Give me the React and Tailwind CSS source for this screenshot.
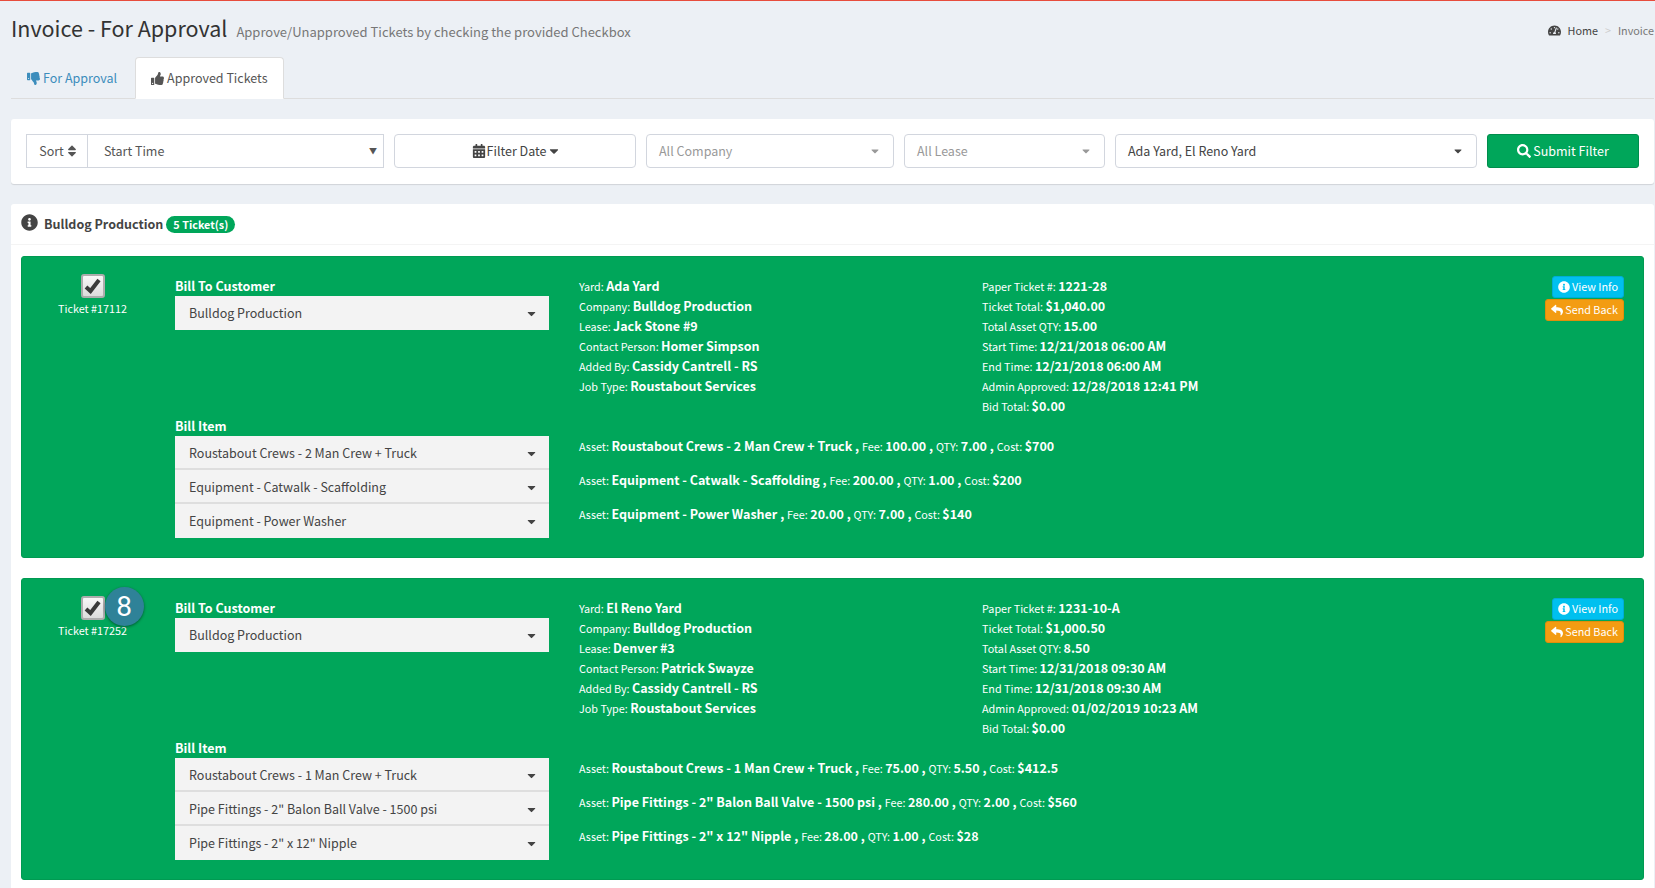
import React from "react";
import { FaThumbsDown, FaThumbsUp, FaCalendarAlt, FaSort, FaCaretDown, FaInfoCircle, FaSearch, FaReply, FaTachometerAlt } from "react-icons/fa";

const tickets = [
  {
    id: "17112",
    left: [["Yard", "Ada Yard"], ["Company", "Bulldog Production"], ["Lease", "Jack Stone #9"], ["Contact Person", "Homer Simpson"], ["Added By", "Cassidy Cantrell - RS"], ["Job Type", "Roustabout Services"]],
    right: [["Paper Ticket #", "1221-28"], ["Ticket Total", "$1,040.00"], ["Total Asset QTY", "15.00"], ["Start Time", "12/21/2018 06:00 AM"], ["End Time", "12/21/2018 06:00 AM"], ["Admin Approved", "12/28/2018 12:41 PM"], ["Bid Total", "$0.00"]],
    items: [
      ["Roustabout Crews - 2 Man Crew + Truck", "100.00", "7.00", "$700"],
      ["Equipment - Catwalk - Scaffolding", "200.00", "1.00", "$200"],
      ["Equipment - Power Washer", "20.00", "7.00", "$140"],
    ],
  },
  {
    id: "17252",
    badge: "8",
    left: [["Yard", "El Reno Yard"], ["Company", "Bulldog Production"], ["Lease", "Denver #3"], ["Contact Person", "Patrick Swayze"], ["Added By", "Cassidy Cantrell - RS"], ["Job Type", "Roustabout Services"]],
    right: [["Paper Ticket #", "1231-10-A"], ["Ticket Total", "$1,000.50"], ["Total Asset QTY", "8.50"], ["Start Time", "12/31/2018 09:30 AM"], ["End Time", "12/31/2018 09:30 AM"], ["Admin Approved", "01/02/2019 10:23 AM"], ["Bid Total", "$0.00"]],
    items: [
      ["Roustabout Crews - 1 Man Crew + Truck", "75.00", "5.50", "$412.5"],
      ['Pipe Fittings - 2" Balon Ball Valve - 1500 psi', "280.00", "2.00", "$560"],
      ['Pipe Fittings - 2" x 12" Nipple', "28.00", "1.00", "$28"],
    ],
  },
];

function GreySelect({ text, divider }) {
  return (
    <div className={`h-[34px] bg-[#f3f3f3] flex items-center justify-between pl-[14px] pr-[11px] text-[12.5px] text-[#444] ${divider ? "border-b-2 border-[#dedede] pt-[2px]" : ""}`}>
      <span>{text}</span>
      <FaCaretDown className="text-[13px] text-[#444]" />
    </div>
  );
}

function Info({ rows }) {
  return (
    <div>
      {rows.map(([k, v]) => (
        <div key={k} className="h-[20px] leading-[20px] whitespace-nowrap">
          <span className="text-[10.8px]">{k}: </span>
          <b className="text-[12.5px] font-bold">{v}</b>
        </div>
      ))}
    </div>
  );
}

function Ticket({ t }) {
  return (
    <div className="bg-[#00a65a] rounded-[3px] border border-[#009a52] text-white pt-[19px] pb-[19px] pr-[19px] flex">
      <div className="w-[153px] shrink-0 flex flex-col items-center pr-[12px] mt-[-2px]">
        <div className="relative w-[24px] h-[24px]">
          <div className="w-[24px] h-[24px] rounded-[3px] border-2 border-[#adadad] bg-gradient-to-b from-[#f8f8f8] to-[#dcdcdc] flex items-center justify-center">
            <svg width="17" height="16" viewBox="0 0 17 16" fill="none">
              <polyline points="2,9 6.5,13 15,2" stroke="#3a3a3a" strokeWidth="4" />
            </svg>
          </div>
          {t.badge && (
            <div className="absolute left-[24px] top-[-9px] w-[39px] h-[39px] rounded-full bg-[#2f8298] shadow-[0_1px_3px_rgba(0,0,0,0.45)] flex items-center justify-center text-[28px] text-white" style={{ fontFamily: "Roboto, sans-serif" }}>
              {t.badge}
            </div>
          )}
        </div>
        <div className="text-[10.8px] leading-[16px] mt-[2px]">Ticket #{t.id}</div>
      </div>
      <div className="flex-1 min-w-0">
        <div className="flex h-[140px]">
          <div className="w-[374px] shrink-0">
            <div className="h-[20px] leading-[20px] text-[12.5px] font-bold">Bill To Customer</div>
            <GreySelect text="Bulldog Production" />
          </div>
          <div className="ml-[30px] w-[403px] shrink-0"><Info rows={t.left} /></div>
          <div className="w-[300px] shrink-0"><Info rows={t.right} /></div>
          <div className="flex-1 flex flex-col items-end gap-[1px]">
            <div className="h-[22px] rounded-[3px] bg-[#00c0ef] border border-[#00acd6] px-[5px] pb-[1px] text-[10.8px] flex items-center gap-[2px] whitespace-nowrap"><FaInfoCircle className="text-[12px]" />View Info</div>
            <div className="h-[22px] rounded-[3px] bg-[#f39c12] border border-[#e08e0b] px-[5px] pb-[1px] text-[10.8px] flex items-center gap-[2px] whitespace-nowrap"><FaReply className="text-[12px]" />Send Back</div>
          </div>
        </div>
        <div className="flex">
          <div className="w-[374px] shrink-0">
            <div className="h-[20px] leading-[20px] text-[12.5px] font-bold">Bill Item</div>
            {t.items.map((it, i) => <GreySelect key={it[0]} text={it[0]} divider={i < 2} />)}
          </div>
          <div className="ml-[30px] pt-[20px]">
            {t.items.map((it) => (
              <div key={it[0]} className="h-[34px] leading-[20px] whitespace-nowrap">
                <span className="text-[10.8px]">Asset: </span><b className="text-[12.5px]">{it[0]} </b><span className="font-bold text-[12.5px]">, </span>
                <span className="text-[10.8px]">Fee: </span><b className="text-[12.5px]">{it[1]} </b><span className="font-bold text-[12.5px]">, </span>
                <span className="text-[10.8px]">QTY: </span><b className="text-[12.5px]">{it[2]} </b><span className="font-bold text-[12.5px]">, </span>
                <span className="text-[10.8px]">Cost: </span><b className="text-[12.5px]">{it[3]}</b>
              </div>
            ))}
          </div>
        </div>
      </div>
    </div>
  );
}

function Select({ text, width, muted }) {
  return (
    <div className={`${width} h-[34px] bg-white border border-[#d2d6de] rounded-[4px] flex items-center justify-between pl-[12px] pr-[12px] ${muted ? "text-[#999]" : "text-[#444]"}`}>
      <span>{text}</span>
      <FaCaretDown className={`text-[12px] ${muted ? "text-[#999]" : "text-[#444]"}`} />
    </div>
  );
}

export default function App() {
  return (
    <div className="h-[888px] overflow-hidden bg-[#ecf0f5] border-t border-[#e74c3c] text-[#333] text-[12.5px]" style={{ fontFamily: '"Noto Sans CJK SC", "Noto Sans", sans-serif' }}>
      <div className="pl-[11px] pr-[1px]">
        <div className="h-[56px] flex items-center justify-between">
          <div className="flex items-baseline gap-[9px] whitespace-nowrap mb-[2px]">
            <span className="text-[21.5px] text-[#333]">Invoice - For Approval</span>
            <span className="text-[13px] text-[#777]">Approve/Unapproved Tickets by checking the provided Checkbox</span>
          </div>
          <div className="flex items-center text-[10.8px] text-[#444] whitespace-nowrap mt-[3px]">
            <FaTachometerAlt className="text-[13px] mr-[7px]" />
            <span>Home</span>
            <span className="text-[#ccc] mx-[7px]">&gt;</span>
            <span className="text-[#777]">Invoice</span>
          </div>
        </div>
        <div className="h-[42px] border-b border-[#ddd] flex items-end">
          <div className="h-[41px] pl-[16px] pr-[18px] pt-[1px] flex items-center gap-[3px] text-[#3c8dbc]"><FaThumbsDown className="text-[13px]" />For Approval</div>
          <div className="h-[42px] px-[15px] flex items-center gap-[3px] bg-white border border-[#ddd] border-b-white rounded-t-[4px] text-[#555] mb-[-1px]"><FaThumbsUp className="text-[13px]" />Approved Tickets</div>
        </div>
        <div className="mt-[20px] h-[65px] bg-white rounded-[3px] shadow-[0_1px_1px_rgba(0,0,0,0.12)] px-[15px] pt-[15px] flex items-start gap-[10px]">
          <div className="w-[358px] h-[34px] flex border border-[#d2d6de] text-[#555]">
            <div className="w-[61px] flex items-center justify-center gap-[1px] pl-[4px] border-r border-[#d2d6de]">Sort<FaSort className="text-[14px]" /></div>
            <div className="flex-1 flex items-center justify-between pl-[16px] pr-[6px]"><span>Start Time</span><span className="text-[8px]">▼</span></div>
          </div>
          <div className="w-[242px] h-[34px] bg-white border border-[#d2d6de] rounded-[4px] flex items-center justify-center gap-[1px] pl-[3px] text-[#444]"><FaCalendarAlt className="text-[14px]" />Filter Date<FaCaretDown className="text-[14px]" /></div>
          <Select text="All Company" width="w-[248px]" muted />
          <Select text="All Lease" width="w-[201px]" muted />
          <Select text="Ada Yard, El Reno Yard" width="w-[362px]" />
          <div className="w-[152px] h-[34px] bg-[#00a65a] border border-[#008d4c] rounded-[3px] flex items-center justify-center gap-[2px] text-white"><FaSearch className="text-[14px]" />Submit Filter</div>
        </div>
        <div className="mt-[20px] bg-white rounded-t-[3px]">
          <div className="h-[41px] border-b border-[#f4f4f4] pl-[10px] flex items-center gap-[3px]">
            <FaInfoCircle className="text-[17px] text-[#444] mr-[3px] mb-[4px]" />
            <b className="text-[12.5px] text-[#444]">Bulldog Production</b>
            <span className="h-[17px] px-[7px] rounded-full bg-[#00a65a] text-white text-[10.8px] font-bold flex items-center">5 Ticket(s)</span>
          </div>
          <div className="px-[10px] pt-[11px] pb-[20px] flex flex-col gap-[20px]">
            {tickets.map((t) => <Ticket key={t.id} t={t} />)}
          </div>
        </div>
      </div>
    </div>
  );
}
